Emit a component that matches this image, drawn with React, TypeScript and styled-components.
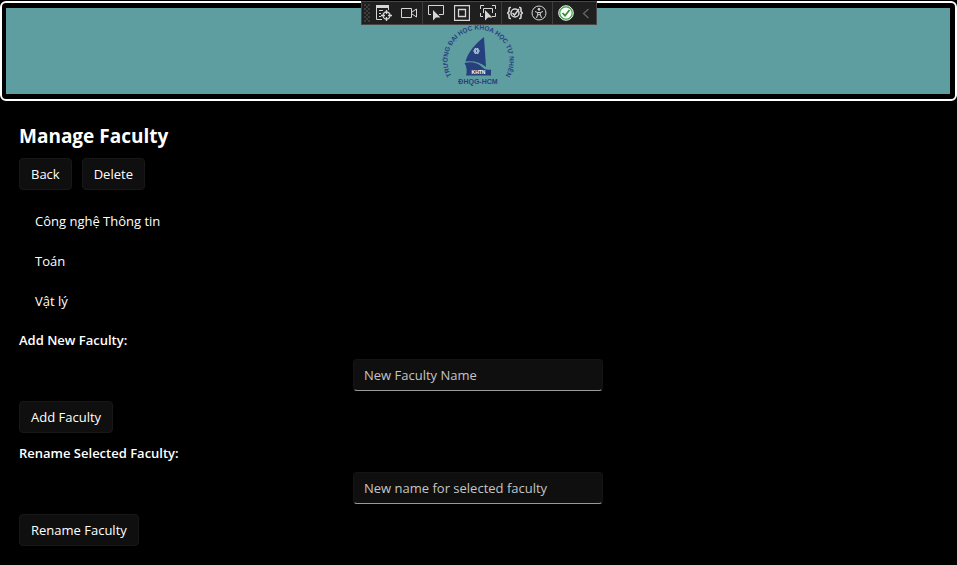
import React from "react";
import styled, { createGlobalStyle } from "styled-components";

const GlobalStyle = createGlobalStyle`
  * { box-sizing: border-box; }
  body {
    margin: 0;
    background: #000;
    color: #fff;
    font-family: "Open Sans", "Noto Sans", sans-serif;
    font-size: 13px;
    line-height: 19px;
  }
`;

const Page = styled.div`
  position: relative;
  padding-top: 1px;
`;

const BannerFrame = styled.header`
  border: 2px solid #fff;
  border-radius: 6px;
  padding: 5px 5px 5px 4px;
`;

const Banner = styled.div`
  display: flex;
  justify-content: center;
  padding: 6px 0;
  background: #5f9ea0;
`;

const LogoSvg = styled.svg`
  display: block;
  width: 74px;
  height: 74px;
  overflow: visible;
  font-family: "Liberation Sans", Arial, sans-serif;
  font-weight: 700;
`;

const DebugBar = styled.div`
  position: absolute;
  top: 1px;
  left: 50%;
  transform: translateX(-50%);
  display: flex;
  align-items: center;
  height: 24px;
  padding: 0 1px;
  background: #1f1f1f;
  border: 1px solid #4a4545;
`;

const ToolGroup = styled.div<{ $gap?: number }>`
  display: flex;
  align-items: center;
  height: 22px;
  gap: ${(p) => p.$gap ?? 8}px;
  padding: 0 5px;
  & + & { border-left: 1px solid #3d3d3d; }
`;

const ToolButton = styled.button<{ $narrow?: boolean }>`
  display: block;
  width: ${(p) => (p.$narrow ? 8 : 16)}px;
  height: 16px;
  padding: 0;
  border: 0;
  background: none;
  svg { display: block; }
`;

const Content = styled.main`
  display: flex;
  flex-direction: column;
  align-items: flex-start;
  gap: 10px;
  padding: 24px 20px 18px 19px;
`;

const Title = styled.h1`
  margin: 0;
  font-size: 19px;
  line-height: 23px;
  font-weight: 700;
`;

const ButtonRow = styled.div`
  display: flex;
  gap: 10px;
`;

const Button = styled.button`
  height: 32px;
  padding: 0 11px;
  border: 1px solid #181818;
  border-radius: 4px;
  background: #0f0f0f;
  color: #fff;
  font: inherit;
`;

const FacultyList = styled.ul`
  align-self: stretch;
  margin: 0;
  padding: 1px 0 0;
  list-style: none;
`;

const FacultyItem = styled.li`
  display: flex;
  align-items: center;
  height: 40px;
  padding: 1px 16px 0;
`;

const Label = styled.label`
  font-weight: 600;
  line-height: 18px;
  & ~ & { padding-top: 1px; }
`;

const TextBox = styled.input`
  align-self: center;
  width: 250px;
  height: 32px;
  padding: 0 10px;
  border: 1px solid #141414;
  border-bottom-color: #9a9a9a;
  border-radius: 4px;
  background: #0f0f0f;
  color: #fff;
  font: inherit;
  &::placeholder { color: #c5c5c5; opacity: 1; }
`;

const NAVY = "#263f7d";

const Logo = () => (
  <LogoSvg viewBox="0 0 148 148" fill={NAVY} role="img" aria-label="ĐHQG-HCM">
    <path id="ring" d="M30 136A62 62 0 1 1 120 136" fill="none" />
    <text fontSize="13" textAnchor="middle">
      <textPath href="#ring" startOffset="50%">TRƯỜNG ĐẠI HỌC KHOA HỌC TỰ NHIÊN</textPath>
    </text>
    <path d="M86 46C70 58 54 76 49 95C65 93 79 97 90 106Z" />
    <path d="M47 98C62 94 75 99 82 106C88 112 94 112 100 111V123H50C53 114 51 105 47 98Z" />
    <g fill="none" stroke="#b9d4df" strokeWidth="1.6">
      <ellipse cx="71" cy="74" rx="6" ry="2.5" />
      <ellipse cx="71" cy="74" rx="6" ry="2.5" transform="rotate(60 71 74)" />
      <ellipse cx="71" cy="74" rx="6" ry="2.5" transform="rotate(120 71 74)" />
    </g>
    <text x="75" y="120" fontSize="10" fill="#fff" textAnchor="middle">KHTN</text>
    <text x="74" y="140" fontSize="14" textAnchor="middle">ĐHQG-HCM</text>
  </LogoSvg>
);

const Icon = ({ children, w = 16 }: { children: React.ReactNode; w?: number }) => (
  <svg width={w} height="16" viewBox={`0 0 ${w} 16`} fill="none" stroke="#d6d6d6">
    {children}
  </svg>
);

const cursor = "M5 5V15.500L8 12.500H12.500Z";

const Grip = () => (
  <svg width="8" height="18" viewBox="0 0 8 18" fill="#3c3c3c" aria-hidden="true">
    {[0, 2, 4, 6, 8, 10, 12, 14, 16].map((y) => (
      <path key={y} d={y % 4 ? `M3 ${y}h2v2h-2z` : `M1 ${y}h2v2h-2zM5 ${y}h2v2h-2z`} />
    ))}
  </svg>
);

const DebugToolbar = () => (
  <DebugBar role="toolbar" aria-label="Debug tools">
    <Grip />
    <ToolGroup $gap={9}>
      <ToolButton aria-label="Live visual tree">
        <Icon>
          <path d="M0 1.500H13" strokeWidth="3" />
          <path d="M.5 2V14.500H6M12.500 2V5M3 5.500H7M3 8.500H5M3 11.500H5" />
          <circle cx="10.500" cy="10.500" r="3.500" strokeWidth="1.300" />
          <path d="M10.500 5V9M10.500 12V16M5 10.500H9M12 10.500H16" strokeWidth="1.300" />
        </Icon>
      </ToolButton>
      <ToolButton aria-label="Record">
        <Icon>
          <path d="M.5 3.500H10.500V12.500H.5ZM11 7L15.500 4V12L11 9" />
        </Icon>
      </ToolButton>
    </ToolGroup>
    <ToolGroup $gap={10}>
      <ToolButton aria-label="Select element">
        <Icon>
          <path d="M3 9.500H.5V.5H15.500V9.500H11" />
          <path d={cursor} fill="#d6d6d6" stroke="none" />
        </Icon>
      </ToolButton>
      <ToolButton aria-label="Layout adorners">
        <Icon>
          <path d="M.5 .5H15.500V15.500H.5ZM4.500 4.500H11.500V11.500H4.500Z" strokeWidth="1.300" />
        </Icon>
      </ToolButton>
      <ToolButton aria-label="Track focused element">
        <Icon>
          <path d="M.5 4V.5H4M12 .5H15.500V4M.5 8V11.500H3M12 11.500H15.500V8M3.500 8V3.500H12.500V8" />
          <path d={cursor} fill="#d6d6d6" stroke="none" />
        </Icon>
      </ToolButton>
    </ToolGroup>
    <ToolGroup>
      <ToolButton aria-label="Binding failures">
        <Icon>
          <path d="M4 2.500H3Q2 2.500 2 4V6.500L.7 8L2 9.500V12Q2 13.500 3 13.500H4M12 2.500H13Q14 2.500 14 4V6.500L15.300 8L14 9.500V12Q14 13.500 13 13.500H12" strokeWidth="1.600" />
          <circle cx="8" cy="8" r="4" strokeWidth="1.500" />
          <path d="M5.500 8L7.500 10L12 4" strokeWidth="1.500" />
        </Icon>
      </ToolButton>
      <ToolButton aria-label="Accessibility checker">
        <Icon>
          <circle cx="8" cy="8" r="7" />
          <circle cx="8" cy="4.300" r="1" fill="#d6d6d6" />
          <path d="M4 6.500L6.500 7.500H9.500L12 6.500M6.700 7.500V9.500L5.500 13M9.300 7.500V9.500L10.500 13M6.700 9.700H9.300" />
        </Icon>
      </ToolButton>
    </ToolGroup>
    <ToolGroup>
      <ToolButton aria-label="Hot Reload">
        <Icon>
          <circle cx="8" cy="8" r="7.300" fill="#3aa745" stroke="#e8f5e8" strokeWidth="1" />
          <circle cx="8" cy="8" r="5.600" fill="#fff" stroke="none" />
          <path d="M4.500 8L7 10.700L11.500 5" stroke="#388a34" strokeWidth="1.800" />
        </Icon>
      </ToolButton>
      <ToolButton aria-label="Collapse" $narrow>
        <Icon w={8}>
          <path d="M6.500 4L1.500 8.500L6.500 13" stroke="#666" strokeWidth="1.300" />
        </Icon>
      </ToolButton>
    </ToolGroup>
  </DebugBar>
);

const faculties = ["Công nghệ Thông tin", "Toán", "Vật lý"];

export default function App() {
  return (
    <Page>
      <GlobalStyle />
      <BannerFrame>
        <Banner>
          <Logo />
        </Banner>
      </BannerFrame>
      <DebugToolbar />
      <Content>
        <Title>Manage Faculty</Title>
        <ButtonRow>
          <Button>Back</Button>
          <Button>Delete</Button>
        </ButtonRow>
        <FacultyList>
          {faculties.map((name) => (
            <FacultyItem key={name}>{name}</FacultyItem>
          ))}
        </FacultyList>
        <Label htmlFor="new-faculty">Add New Faculty:</Label>
        <TextBox id="new-faculty" placeholder="New Faculty Name" />
        <Button>Add Faculty</Button>
        <Label htmlFor="rename-faculty">Rename Selected Faculty:</Label>
        <TextBox id="rename-faculty" placeholder="New name for selected faculty" />
        <Button>Rename Faculty</Button>
      </Content>
    </Page>
  );
}
